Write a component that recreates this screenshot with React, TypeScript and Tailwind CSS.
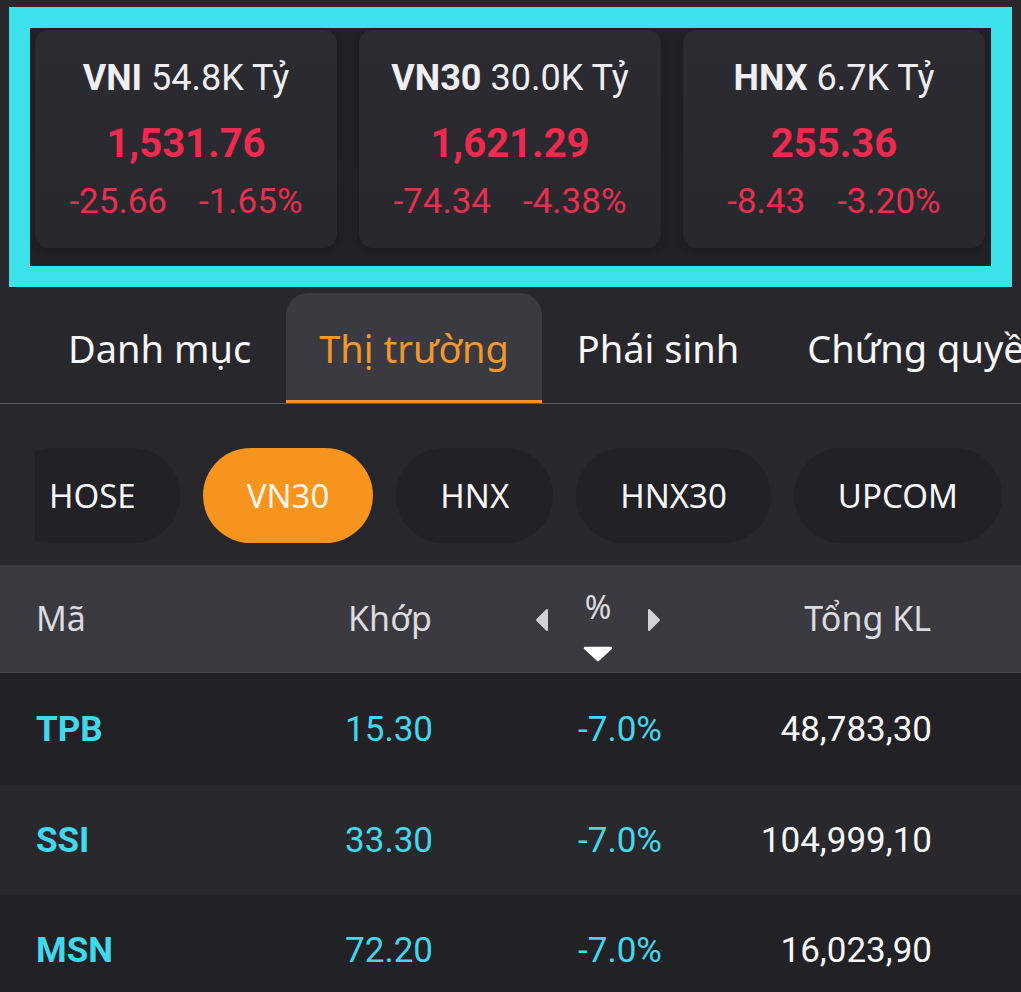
import React from "react";

const cards = [
  { name: "VNI", vol: "54.8K Tỷ", val: "1,531.76", ch: "-25.66", pct: "-1.65%" },
  { name: "VN30", vol: "30.0K Tỷ", val: "1,621.29", ch: "-74.34", pct: "-4.38%" },
  { name: "HNX", vol: "6.7K Tỷ", val: "255.36", ch: "-8.43", pct: "-3.20%" },
];

const tabs = ["Danh mục", "Thị trường", "Phái sinh", "Chứng quyền"];
const pills = ["HOSE", "VN30", "HNX", "HNX30", "UPCOM"];

const rows = [
  { code: "TPB", price: "15.30", pct: "-7.0%", vol: "48,783,30", h: "h-[112px]", bg: "bg-[#222126]" },
  { code: "SSI", price: "33.30", pct: "-7.0%", vol: "104,999,10", h: "h-[110px]", bg: "bg-[#29282d]" },
  { code: "MSN", price: "72.20", pct: "-7.0%", vol: "16,023,90", h: "h-[110px]", bg: "bg-[#222126]" },
];

export default function App() {
  return (
    <div className="w-[1021px] h-[992px] overflow-hidden bg-[#28272c] font-['Noto_Sans',sans-serif]">
      {/* index cards */}
      <div className="pt-[7px] pl-[9px]">
        <div className="w-[1003px] h-[280px] border-[21px] border-[#3de1ea] bg-[#222127] flex gap-[22px] pl-[5px] pt-[2px] font-['Roboto',sans-serif]">
          {cards.map((c) => (
            <div
              key={c.name}
              className="w-[302px] h-[218px] rounded-[14px] bg-gradient-to-b from-[#2c2b31] to-[#29282e] flex flex-col items-center pt-[28px] shadow-[0_2px_6px_rgba(0,0,0,0.25)]"
            >
              <div className="h-[40px] leading-[40px] text-[36px] text-[#efeff3] whitespace-nowrap">
                <span className="font-bold">{c.name}</span> <span>{c.vol}</span>
              </div>
              <div className="mt-[24px] h-[44px] leading-[44px] text-[40px] font-bold text-[#ee2b4f]">{c.val}</div>
              <div className="mt-[17px] h-[38px] leading-[38px] text-[35px] text-[#e6304f] flex gap-[32px] whitespace-nowrap">
                <span>{c.ch}</span>
                <span>{c.pct}</span>
              </div>
            </div>
          ))}
        </div>
      </div>

      {/* tabs */}
      <div className="mt-[6px] flex gap-[2px] pl-[35px] overflow-hidden whitespace-nowrap">
        {tabs.map((t, i) => {
          const active = i === 1;
          return (
            <div
              key={t}
              className={
                active
                  ? "shrink-0 h-[110px] px-[33px] flex items-center rounded-t-[22px] bg-[#3b3a40] border-b-[3px] border-[#f0962c] text-[38px] text-[#f0982e]"
                  : "shrink-0 h-[110px] px-[33px] flex items-center border-b-[3px] border-transparent text-[38px] text-[#f7f7f9]"
              }
            >
              <span className="pt-[3px]">{t}</span>
            </div>
          );
        })}
      </div>
      <div className="h-px bg-[#5c5b61]" />

      {/* pills */}
      <div className="mt-[44px] ml-[35px] overflow-hidden">
        <div className="flex gap-[23px] -ml-[30px] whitespace-nowrap">
          {pills.map((p, i) => (
            <div
              key={p}
              className={
                i === 1
                  ? "shrink-0 h-[95px] px-[44px] rounded-full bg-[#f7941e] flex items-center text-[33px] text-[#fff6ea]"
                  : "shrink-0 h-[95px] px-[44px] rounded-full bg-[#222126] flex items-center text-[33px] text-[#f7f7f9]"
              }
            >
              {p}
            </div>
          ))}
        </div>
      </div>

      {/* table header */}
      <div className="mt-[22px] h-[108px] bg-[#3b3a40] border-b border-[#46454b] flex items-center pl-[36px] text-[34px] text-[#dcdce0]">
        <div className="w-[250px]">Mã</div>
        <div className="w-[146px] text-right">Khớp</div>
        <div className="w-[229px] flex justify-end self-stretch">
          <div className="w-[126px] flex items-center justify-between">
            <svg width="14" height="24" viewBox="0 0 14 24" className="mt-[2px]">
              <path d="M12 2 L2 12 L12 22 Z" fill="#d2d2d6" stroke="#d2d2d6" strokeWidth="2" strokeLinejoin="round" />
            </svg>
            <div className="self-start mt-[25px] flex flex-col items-center">
              <span className="block h-[34px] leading-[34px] text-[32px] text-[#dcdce0]">%</span>
              <svg width="30" height="16" viewBox="0 0 30 16" className="mt-[22px]">
                <path d="M2 2 L28 2 L15 14 Z" fill="#ffffff" stroke="#ffffff" strokeWidth="2.5" strokeLinejoin="round" />
              </svg>
            </div>
            <svg width="14" height="24" viewBox="0 0 14 24" className="mt-[2px]">
              <path d="M2 2 L12 12 L2 22 Z" fill="#d2d2d6" stroke="#d2d2d6" strokeWidth="2" strokeLinejoin="round" />
            </svg>
          </div>
        </div>
        <div className="w-[270px] text-right">Tổng KL</div>
      </div>

      {/* rows */}
      {rows.map((r) => (
        <div
          key={r.code}
          className={`${r.h} ${r.bg} flex items-center pl-[36px] font-['Roboto',sans-serif] text-[35px] leading-[40px]`}
        >
          <div className="w-[250px] font-bold text-[#42d8eb] pt-[2px]">{r.code}</div>
          <div className="w-[147px] text-right text-[#42d8eb] pt-[2px]">{r.price}</div>
          <div className="w-[229px] text-right text-[#42d8eb] pt-[2px]">{r.pct}</div>
          <div className="w-[270px] text-right text-[#f7f7f9] pt-[2px]">{r.vol}</div>
        </div>
      ))}
    </div>
  );
}
